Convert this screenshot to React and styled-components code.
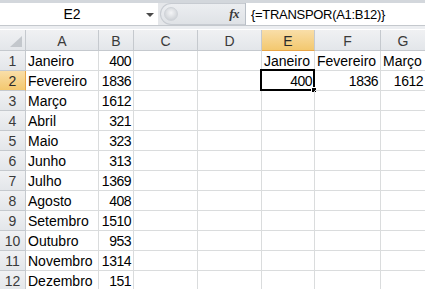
import React from "react";
import styled, { createGlobalStyle } from "styled-components";

const GlobalStyle = createGlobalStyle`
  html, body { margin: 0; padding: 0; background: #ffffff; overflow: hidden; }
  * { box-sizing: border-box; }
`;

const Window = styled.div`
  width: 425px;
  height: 289px;
  overflow: hidden;
  background: #ffffff;
  font-family: "Liberation Sans", Arial, sans-serif;
  color: #000;
`;

const TopStrip = styled.div`
  height: 3px;
  background: #d3d7dc;
`;

const FormulaBar = styled.div`
  display: flex;
  height: 23px;
  background: #e5e7ea;
  border-bottom: 1px solid #c4c8cd;
`;

const NameBox = styled.div`
  position: relative;
  width: 158px;
  display: flex;
  align-items: center;
  justify-content: center;
  background: #ffffff;
  font-size: 14px;
  padding-right: 14px;
`;

const Dropdown = styled.span`
  position: absolute;
  right: 4px;
  top: 10px;
  width: 0;
  height: 0;
  border-left: 4px solid transparent;
  border-right: 4px solid transparent;
  border-top: 4px solid #4a4a4a;
`;

const Splitter = styled.div`
  display: flex;
  align-items: center;
  width: 85px;
  margin-left: 2px;
  background: linear-gradient(#eceef1, #dfe2e6);
  border: 1px solid #c7cbd1;
  border-right: none;
  border-radius: 11px 0 0 11px;
  padding-left: 3px;
  padding-right: 6px;
`;

const Knob = styled.div`
  width: 14px;
  height: 14px;
  border-radius: 50%;
  background: radial-gradient(circle at 50% 40%, #f4f5f7 0%, #d7dade 60%, #c3c7cc 100%);
  border: 1px solid #cfd3d8;
`;

const Fx = styled.span`
  margin-left: auto;
  font-family: "Liberation Serif", "Times New Roman", serif;
  font-style: italic;
  font-weight: bold;
  font-size: 13px;
  color: #3a3a3a;
  letter-spacing: -0.5px;
`;

const FormulaInput = styled.div`
  flex: 1;
  display: flex;
  align-items: center;
  background: #ffffff;
  border-left: 1px solid #b9bfc7;
  padding-left: 5px;
  font-size: 13px;
  letter-spacing: -0.3px;
  white-space: nowrap;
`;

const Gap = styled.div`
  height: 4px;
  background: #eceef1;
  border-bottom: 1px solid #ffffff;
`;

const Sheet = styled.div`
  display: grid;
  grid-template-columns: 26px 73px 35px 64px 64px 53px 66px 45px;
  grid-auto-rows: 20px;
  grid-template-rows: 21px;
`;

const HeaderCell = styled.div`
  display: flex;
  align-items: center;
  justify-content: center;
  font-size: 14px;
  color: ${(p) => (p.$active ? "#2b2b2b" : "#3a3a3a")};
  background: ${(p) =>
    p.$active
      ? "linear-gradient(#f9dea8, #f3c86f)"
      : "linear-gradient(#f0f1f3, #e3e6ea)"};
  border-right: 1px solid ${(p) => (p.$active && p.$row ? "#e8a649" : "#c5c9ce")};
  border-bottom: 1px solid ${(p) => (p.$active && !p.$row ? "#e8a649" : "#c5c9ce")};
  padding-top: 1px;
`;

const Corner = styled(HeaderCell)`
  align-items: flex-end;
  justify-content: flex-end;
  padding: 0 3px 3px 0;
`;

const Cell = styled.div`
  position: relative;
  display: flex;
  align-items: flex-end;
  justify-content: ${(p) => (p.$num ? "flex-end" : "flex-start")};
  padding: 0 2px 1px 2px;
  font-size: 14px;
  line-height: 16px;
  letter-spacing: ${(p) => (p.$num ? "-0.5px" : "0")};
  white-space: nowrap;
  overflow: ${(p) => (p.$selected ? "visible" : "hidden")};
  border-right: 1px solid #dadcdd;
  border-bottom: 1px solid #dadcdd;
`;

const Selection = styled.div`
  position: absolute;
  left: -2px;
  top: -2px;
  right: -1px;
  bottom: -1px;
  border: 2px solid #000;
  pointer-events: none;
`;

const FillHandle = styled.div`
  position: absolute;
  right: -4px;
  bottom: -4px;
  width: 6px;
  height: 6px;
  background: #000;
  border: 1px solid #fff;
`;

const data = [
  ["Janeiro", 400],
  ["Fevereiro", 1836],
  ["Março", 1612],
  ["Abril", 321],
  ["Maio", 323],
  ["Junho", 313],
  ["Julho", 1369],
  ["Agosto", 408],
  ["Setembro", 1510],
  ["Outubro", 953],
  ["Novembro", 1314],
  ["Dezembro", 151],
];

const cols = ["A", "B", "C", "D", "E", "F", "G"];

export default function App() {
  const rows = data.map((d, i) => {
    const r = i + 1;
    const extra = {};
    if (r === 1) {
      extra.E = { v: "Janeiro" };
      extra.F = { v: "Fevereiro" };
      extra.G = { v: "Março" };
    }
    if (r === 2) {
      extra.E = { v: 400, num: true, sel: true };
      extra.F = { v: 1836, num: true };
      extra.G = { v: 1612, num: true };
    }
    return (
      <React.Fragment key={r}>
        <HeaderCell $row $active={r === 2}>{r}</HeaderCell>
        <Cell>{d[0]}</Cell>
        <Cell $num>{d[1]}</Cell>
        <Cell />
        <Cell />
        {["E", "F", "G"].map((c) => {
          const e = extra[c];
          return (
            <Cell key={c} $num={e && e.num} $selected={e && e.sel}>
              {e ? e.v : null}
              {e && e.sel ? (
                <Selection>
                  <FillHandle />
                </Selection>
              ) : null}
            </Cell>
          );
        })}
      </React.Fragment>
    );
  });

  return (
    <Window>
      <GlobalStyle />
      <TopStrip />
      <FormulaBar>
        <NameBox>
          E2
          <Dropdown />
        </NameBox>
        <Splitter>
          <Knob />
          <Fx>fx</Fx>
        </Splitter>
        <FormulaInput>{"{=TRANSPOR(A1:B12)}"}</FormulaInput>
      </FormulaBar>
      <Gap />
      <Sheet>
        <Corner>
          <svg width="12" height="11" viewBox="0 0 12 11">
            <polygon points="12,0 12,11 0,11" fill="#c3c7cc" />
          </svg>
        </Corner>
        {cols.map((c) => (
          <HeaderCell key={c} $active={c === "E"}>{c}</HeaderCell>
        ))}
        {rows}
      </Sheet>
    </Window>
  );
}
